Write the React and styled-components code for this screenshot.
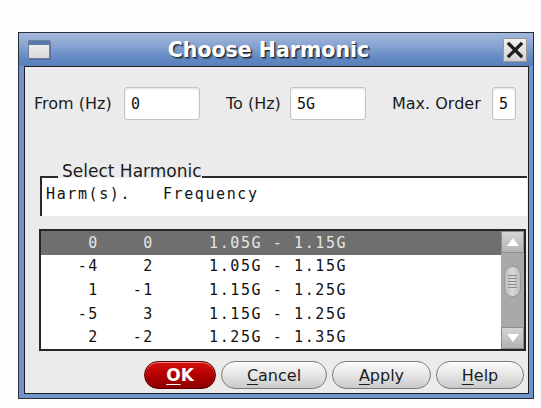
import React from "react";
import styled, { createGlobalStyle } from "styled-components";

const GlobalStyle = createGlobalStyle`
  html, body {
    margin: 0;
    padding: 0;
    background: #fdfdfd;
  }
  body {
    font-family: "DejaVu Sans", "Liberation Sans", sans-serif;
    color: #1a1a1a;
  }
`;

const rows = [
  { a: "0", b: "0", f: "1.05G - 1.15G", selected: true },
  { a: "-4", b: "2", f: "1.05G - 1.15G" },
  { a: "1", b: "-1", f: "1.15G - 1.25G" },
  { a: "-5", b: "3", f: "1.15G - 1.25G" },
  { a: "2", b: "-2", f: "1.25G - 1.35G" },
];

const App = () => {
  return (
    <>
      <GlobalStyle />
      <Page>
        <Window>
          <TitleBar>
            <WinIcon />
            <Title>Choose Harmonic</Title>
            <CloseButton>
              <svg width="22" height="22" viewBox="0 0 22 22">
                <path d="M5 5 L17 17 M17 5 L5 17" stroke="#1c1c1c" strokeWidth="3.2" strokeLinecap="square" />
              </svg>
            </CloseButton>
          </TitleBar>

          <Content>
            <FieldRow>
              <Field $w={166}>
                <Label>From (Hz)</Label>
                <Entry $w={76}>0</Entry>
              </Field>
              <Field $w={140}>
                <Label>To (Hz)</Label>
                <Entry $w={76}>5G</Entry>
              </Field>
              <Field $w={124}>
                <Label>Max. Order</Label>
                <Entry $w={24}>5</Entry>
              </Field>
            </FieldRow>

            <Group>
              <GroupHead>
                <Stub />
                <Legend>Select Harmonic</Legend>
                <Rule />
              </GroupHead>
              <GroupBody>Harm(s).   Frequency</GroupBody>
            </Group>

            <ListBox>
              <Rows>
                {rows.map((r, i) => (
                  <Row key={i} $selected={r.selected}>
                    <Num>{r.a}</Num>
                    <Num>{r.b}</Num>
                    <Freq>{r.f}</Freq>
                  </Row>
                ))}
              </Rows>
              <ScrollBar>
                <ArrowButton>
                  <svg width="12" height="8" viewBox="0 0 12 8">
                    <path d="M6 0 L12 8 L0 8 Z" fill="#ffffff" />
                  </svg>
                </ArrowButton>
                <Track>
                  <Thumb>
                    <Grip />
                    <Grip />
                    <Grip />
                    <Grip />
                    <Grip />
                  </Thumb>
                </Track>
                <ArrowButton>
                  <svg width="12" height="8" viewBox="0 0 12 8">
                    <path d="M0 0 L12 0 L6 8 Z" fill="#ffffff" />
                  </svg>
                </ArrowButton>
              </ScrollBar>
            </ListBox>

            <ButtonRow>
              <PillButton $w={72} $primary>
                <Key>O</Key>K
              </PillButton>
              <PillButton $w={106}>
                <Key>C</Key>ancel
              </PillButton>
              <PillButton $w={99}>
                <Key>A</Key>pply
              </PillButton>
              <PillButton $w={88}>
                <Key>H</Key>elp
              </PillButton>
            </ButtonRow>
          </Content>
        </Window>
      </Page>
    </>
  );
};

export default App;

const Page = styled.div`
  padding: 32px 0 0 18px;
  height: 408px;
  box-sizing: border-box;
`;

const Window = styled.div`
  width: 516px;
  box-sizing: border-box;
  border: 1px solid #2b2f3a;
  background: #7095cd;
  display: flex;
  flex-direction: column;
`;

const TitleBar = styled.div`
  height: 33px;
  display: flex;
  align-items: center;
  padding: 0 6px 0 9px;
  background: linear-gradient(#a4badd, #86a2d0 40%, #6289c3 75%, #5a80bb);
`;

const WinIcon = styled.span`
  width: 22px;
  height: 19px;
  box-sizing: border-box;
  border: 1px solid #6f7f9c;
  background: linear-gradient(#5877ad 0 4px, #ececec 4px, #d9d9d9);
  box-shadow: 1px 1px 0 rgba(40, 50, 80, 0.35);
`;

const Title = styled.div`
  flex: 1;
  text-align: center;
  padding-right: 16px;
  color: #ffffff;
  font-weight: bold;
  font-size: 20.5px;
  text-shadow: 1px 1px 0 #2a2a2a, 2px 2px 1px rgba(0, 0, 0, 0.35);
`;

const CloseButton = styled.div`
  width: 24px;
  height: 24px;
  box-sizing: border-box;
  border: 1px solid #9a9a9a;
  background: linear-gradient(#f0f0f0, #d2d2d2);
  display: flex;
  align-items: center;
  justify-content: center;
`;

const Content = styled.div`
  margin: 0 4px 4px 5px;
  border: 1px solid #1f1f1f;
  background: #ebebeb;
  display: flex;
  flex-direction: column;
  padding-bottom: 4px;
`;

const FieldRow = styled.div`
  display: flex;
  gap: 26px;
  padding: 20px 0 0 9px;
`;

const Field = styled.div`
  width: ${(p) => p.$w}px;
  display: flex;
  align-items: center;
  justify-content: space-between;
`;

const Label = styled.span`
  font-size: 16px;
  color: #1c1c1c;
  white-space: nowrap;
`;

const Entry = styled.div`
  width: ${(p) => p.$w}px;
  height: 33px;
  box-sizing: border-box;
  border: 1px solid #c4c4c4;
  border-radius: 3px;
  background: #ffffff;
  box-shadow: inset 0 1px 2px rgba(0, 0, 0, 0.12);
  display: flex;
  align-items: center;
  padding-left: 6px;
  font-family: "DejaVu Sans Mono", "Liberation Mono", monospace;
  font-size: 15px;
  color: #111;
`;

const Group = styled.div`
  margin: 45px 1px 0 15px;
  display: flex;
  flex-direction: column;
`;

const GroupHead = styled.div`
  display: flex;
  align-items: flex-end;
`;

const Stub = styled.span`
  width: 18px;
  border-bottom: 2px solid #2a2a2a;
`;

const Legend = styled.span`
  font-size: 17px;
  line-height: 13px;
  padding-left: 4px;
  color: #1c1c1c;
  white-space: nowrap;
`;

const Rule = styled.span`
  flex: 1;
  border-bottom: 2px solid #2a2a2a;
`;

const GroupBody = styled.div`
  height: 38px;
  box-sizing: border-box;
  background: #ffffff;
  border-left: 2px solid #2a2a2a;
  padding: 7px 0 0 4px;
  font-family: "DejaVu Sans Mono", "Liberation Mono", monospace;
  font-size: 15px;
  line-height: 18px;
  letter-spacing: 1.6px;
  white-space: pre;
  color: #111;
`;

const ListBox = styled.div`
  margin: 13px 2px 0 14px;
  height: 122px;
  box-sizing: border-box;
  border: 2px solid #262626;
  background: #ffffff;
  display: flex;
`;

const Rows = styled.div`
  flex: 1;
  overflow: hidden;
`;

const Row = styled.div`
  height: 23.6px;
  display: grid;
  grid-template-columns: 58px 55px 1fr;
  align-items: center;
  background: ${(p) => (p.$selected ? "#6f6f6f" : "#ffffff")};
  color: ${(p) => (p.$selected ? "#e6e6e6" : "#111111")};
  font-family: "DejaVu Sans Mono", "Liberation Mono", monospace;
  font-size: 15px;
  letter-spacing: 1.6px;
  white-space: pre;
`;

const Num = styled.span`
  text-align: right;
`;

const Freq = styled.span`
  padding-left: 55px;
`;

const ScrollBar = styled.div`
  width: 23px;
  display: flex;
  flex-direction: column;
  background: #a9a9a9;
`;

const ArrowButton = styled.div`
  height: 22px;
  box-sizing: border-box;
  border: 1px solid #8e8e8e;
  background: linear-gradient(#d4d4d4, #b3b3b3);
  display: flex;
  align-items: center;
  justify-content: center;
`;

const Track = styled.div`
  flex: 1;
  display: flex;
  flex-direction: column;
  align-items: center;
  padding-top: 13px;
`;

const Thumb = styled.div`
  width: 17px;
  height: 31px;
  box-sizing: border-box;
  border: 1px solid #979797;
  border-radius: 9px;
  background: linear-gradient(90deg, #bcbcbc, #dadada 50%, #bcbcbc);
  display: flex;
  flex-direction: column;
  align-items: center;
  justify-content: center;
  gap: 2px;
`;

const Grip = styled.span`
  width: 9px;
  height: 1px;
  background: #8a8a8a;
`;

const ButtonRow = styled.div`
  display: flex;
  justify-content: flex-end;
  gap: 5px;
  margin-top: 10px;
  padding-right: 4px;
`;

const PillButton = styled.div`
  width: ${(p) => p.$w}px;
  height: 28px;
  box-sizing: border-box;
  border-radius: 14px;
  display: flex;
  align-items: center;
  justify-content: center;
  font-family: "DejaVu Sans", "Liberation Sans", sans-serif;
  font-size: ${(p) => (p.$primary ? "17px" : "16px")};
  font-weight: ${(p) => (p.$primary ? "bold" : "normal")};
  color: ${(p) => (p.$primary ? "#ffffff" : "#1c1c1c")};
  border: 1px solid ${(p) => (p.$primary ? "#5a0000" : "#7a7a7a")};
  background: ${(p) =>
    p.$primary
      ? "linear-gradient(#d81010, #b30000 50%, #8c0000)"
      : "linear-gradient(#fafafa, #e6e6e6 50%, #c9c9c9)"};
  box-shadow: inset 0 1px 0 rgba(255, 255, 255, 0.5);
`;

const Key = styled.span`
  text-decoration: underline;
  text-underline-offset: 3px;
`;
